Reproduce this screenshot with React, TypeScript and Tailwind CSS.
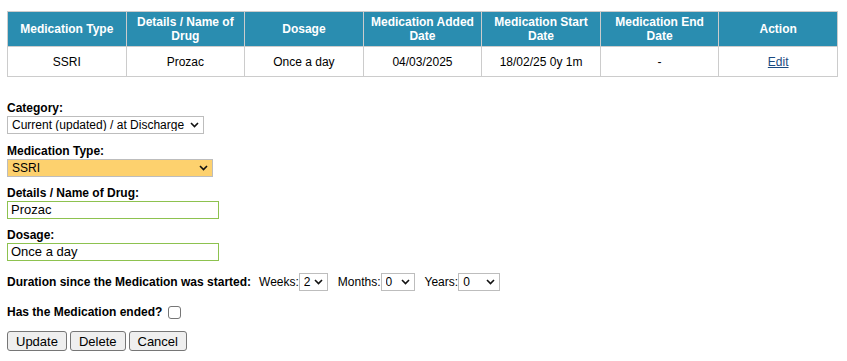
import React from "react";

const HEADERS = [
  "Medication Type",
  "Details / Name of Drug",
  "Dosage",
  "Medication Added Date",
  "Medication Start Date",
  "Medication End Date",
  "Action",
];

const ROW = ["SSRI", "Prozac", "Once a day", "04/03/2025", "18/02/25 0y 1m", "-"];

function Chevron() {
  return (
    <svg
      className="pointer-events-none absolute right-[5px] top-1/2 -translate-y-1/2"
      width="9"
      height="6"
      viewBox="0 0 9 6"
    >
      <path d="M1 1l3.5 3.5L8 1" fill="none" stroke="#111" strokeWidth="1.6" />
    </svg>
  );
}

function Select({
  value,
  options,
  className,
}: {
  value: string;
  options: string[];
  className: string;
}) {
  return (
    <div className={`relative inline-block ${className}`}>
      <select
        defaultValue={value}
        className="h-full w-full appearance-none border border-[#bdbdbd] bg-transparent pl-[4px] pr-[16px] text-[12px] leading-none text-black outline-none"
      >
        {options.map((o) => (
          <option key={o}>{o}</option>
        ))}
      </select>
      <Chevron />
    </div>
  );
}

export default function App() {
  return (
    <div className="min-h-[361px] bg-white px-[7px] pt-[11px] font-['Liberation_Sans',Arial,sans-serif] text-[12px] text-black">
      <table className="w-[831px] table-fixed border-collapse">
        <thead>
          <tr className="h-[35px] bg-[#2a8db0]">
            {HEADERS.map((h) => (
              <th
                key={h}
                className="border border-[#cccccc] px-[4px] text-center text-[12px] font-bold leading-[14px] text-white"
              >
                {h}
              </th>
            ))}
          </tr>
        </thead>
        <tbody>
          <tr className="h-[30px]">
            {ROW.map((c, i) => (
              <td key={i} className="border border-[#cccccc] text-center">
                {c}
              </td>
            ))}
            <td className="border border-[#cccccc] text-center">
              <a href="#" className="text-[#1b4a80] underline">
                Edit
              </a>
            </td>
          </tr>
        </tbody>
      </table>

      <div className="mt-[24px] flex flex-col items-start">
        <label className="font-bold leading-[14px]">Category:</label>
        <Select
          value="Current (updated) / at Discharge"
          options={["Current (updated) / at Discharge", "On Admission"]}
          className="mt-[1px] h-[18px] w-[197px]"
        />

        <label className="mt-[10px] font-bold leading-[14px]">Medication Type:</label>
        <div className="mt-[1px] bg-[#fdd16e]">
          <Select value="SSRI" options={["SSRI", "SNRI", "Antipsychotic"]} className="h-[18px] w-[206px]" />
        </div>

        <label className="mt-[9px] font-bold leading-[14px]">Details / Name of Drug:</label>
        <input
          defaultValue="Prozac"
          className="mt-[1px] h-[18px] w-[212px] border border-[#8dc24f] px-[3px] text-[13px] outline-none"
        />

        <label className="mt-[9px] font-bold leading-[14px]">Dosage:</label>
        <input
          defaultValue="Once a day"
          className="mt-[1px] h-[18px] w-[212px] border border-[#8dc24f] px-[3px] text-[13px] outline-none"
        />

        <div className="mt-[12px] flex h-[18px] items-center">
          <span className="font-bold">Duration since the Medication was started:</span>
          <span className="ml-[8px]">Weeks:</span>
          <Select value="2" options={["0", "1", "2", "3"]} className="h-[18px] w-[29px]" />
          <span className="ml-[10px]">Months:</span>
          <Select value="0" options={["0", "1", "2"]} className="h-[18px] w-[34px]" />
          <span className="ml-[10px]">Years:</span>
          <Select value="0" options={["0", "1", "2"]} className="h-[18px] w-[42px]" />
        </div>

        <div className="mt-[12px] flex items-center">
          <span className="font-bold">Has the Medication ended?</span>
          <input
            type="checkbox"
            className="ml-[6px] h-[13px] w-[13px] appearance-none rounded-[3px] border border-[#767676] bg-white"
          />
        </div>

        <div className="mt-[10px] flex gap-[3px]">
          {["Update", "Delete", "Cancel"].map((b) => (
            <button
              key={b}
              className="h-[20px] rounded-[3px] border border-[#767676] bg-[#efefef] px-[8px] text-[13px] leading-none text-black"
            >
              {b}
            </button>
          ))}
        </div>
      </div>
    </div>
  );
}
